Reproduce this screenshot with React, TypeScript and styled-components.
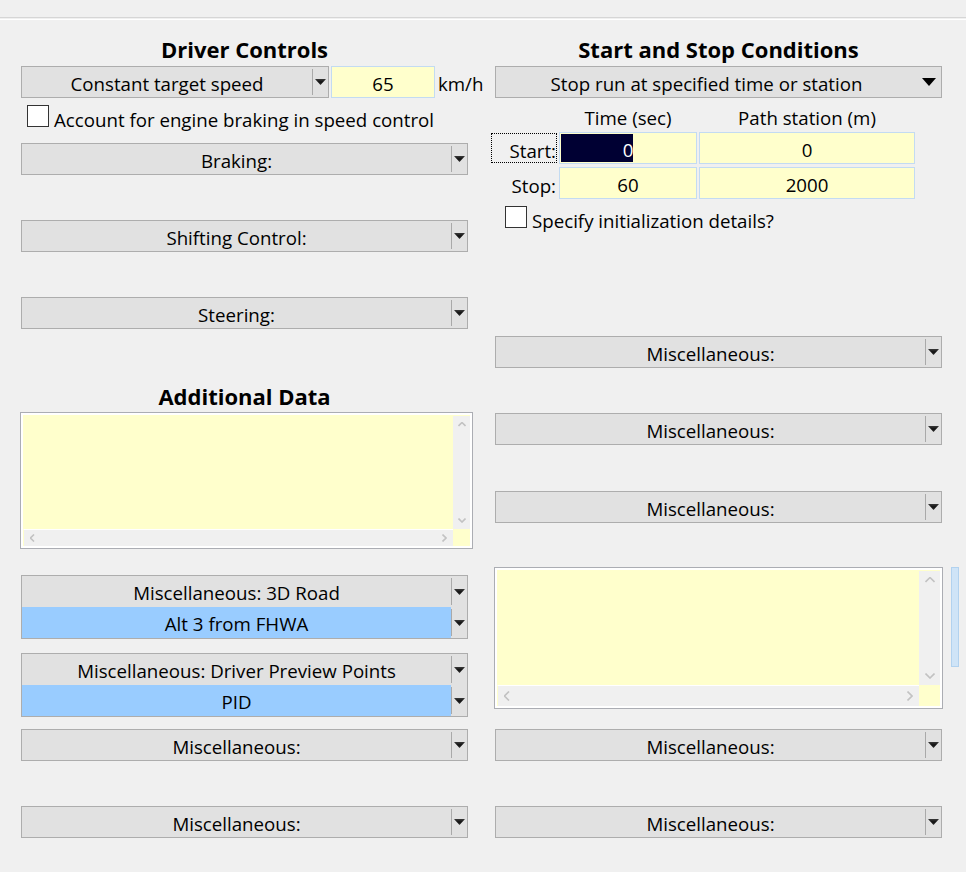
import React from 'react';
import styled, { createGlobalStyle } from 'styled-components';

const GlobalStyle = createGlobalStyle`
  html, body { margin: 0; padding: 0; background: #f0f0f0; }
  body {
    font-family: "Open Sans", "Noto Sans", "Liberation Sans", sans-serif;
    font-size: 18.7px;
    color: #000;
  }
  * { box-sizing: border-box; }
`;

const Window = styled.div`
  width: 966px;
  height: 872px;
  background: #f0f0f0;
  overflow: hidden;
`;

const TopStrip = styled.div`
  height: 18px;
  border-bottom: 1px solid #d6d6d6;
`;

const TopHighlight = styled.div`
  height: 1px;
  margin-top: 1px;
  background: #ffffff;
`;

const Columns = styled.div`
  display: grid;
  grid-template-columns: 447px 447px;
  column-gap: 27px;
  padding-left: 21px;
`;

const Column = styled.div`
  display: flex;
  flex-direction: column;
`;

const Heading = styled.h2<{ $mt: number }>`
  margin: ${(p) => p.$mt}px 0 0;
  height: 26px;
  line-height: 26px;
  font-size: 22px;
  font-weight: 700;
  text-align: center;
  white-space: nowrap;
`;

/* ---------- combo boxes ---------- */

const ComboFrame = styled.div<{ $mt?: number; $w?: number }>`
  margin-top: ${(p) => p.$mt ?? 0}px;
  width: ${(p) => (p.$w ? `${p.$w}px` : '100%')};
  flex-shrink: 0;
  border: 1px solid #adadad;
  background: #e1e1e1;
  display: flex;
  flex-direction: column;
`;

const ComboRow = styled.div<{ $h: number }>`
  height: ${(p) => p.$h}px;
  display: flex;
`;

const ComboText = styled.div<{ $selected?: boolean }>`
  flex: 1;
  display: flex;
  align-items: center;
  justify-content: center;
  padding-top: 2px;
  white-space: nowrap;
  background: ${(p) => (p.$selected ? '#99ccff' : 'transparent')};
`;

const Separator = styled.div`
  width: 1px;
  margin: 2px 0;
  background: #a9a9a9;
`;

const ArrowSlot = styled.div<{ $w: number }>`
  width: ${(p) => p.$w}px;
  display: flex;
  align-items: center;
  justify-content: center;
`;

const SmallArrow = () => (
  <svg width="11" height="6" viewBox="0 0 11 6">
    <defs>
      <linearGradient id="arrowShade" x1="0" y1="0" x2="0" y2="1">
        <stop offset="0" stopColor="#3a3a3a" />
        <stop offset="0.5" stopColor="#111" />
        <stop offset="1" stopColor="#333" />
      </linearGradient>
    </defs>
    <polygon points="0,0 11,0 5.5,6" fill="url(#arrowShade)" />
  </svg>
);

const BigArrow = () => (
  <svg width="14" height="8" viewBox="0 0 14 8">
    <polygon points="0,0 14,0 7,8" fill="#000" />
  </svg>
);

type ComboProps = { label: string; mt?: number; w?: number; plain?: boolean };

const Combo = ({ label, mt, w, plain }: ComboProps) => (
  <ComboFrame $mt={mt} $w={w}>
    <ComboRow $h={30}>
      <ComboText>{label}</ComboText>
      {plain ? (
        <ArrowSlot $w={24}>
          <BigArrow />
        </ArrowSlot>
      ) : (
        <>
          <Separator />
          <ArrowSlot $w={15}>
            <SmallArrow />
          </ArrowSlot>
        </>
      )}
    </ComboRow>
  </ComboFrame>
);

const StackedCombo = ({ label, value, mt }: { label: string; value: string; mt: number }) => (
  <ComboFrame $mt={mt}>
    <ComboRow $h={31}>
      <ComboText>{label}</ComboText>
      <Separator />
      <ArrowSlot $w={15}>
        <SmallArrow />
      </ArrowSlot>
    </ComboRow>
    <ComboRow $h={31}>
      <ComboText $selected>{value}</ComboText>
      <Separator />
      <ArrowSlot $w={15}>
        <SmallArrow />
      </ArrowSlot>
    </ComboRow>
  </ComboFrame>
);

/* ---------- edits ---------- */

const SpeedRow = styled.div<{ $mt: number }>`
  margin-top: ${(p) => p.$mt}px;
  display: flex;
  align-items: center;
  gap: 2px;
`;

const EditBox = styled.div<{ $w?: number }>`
  width: ${(p) => (p.$w ? `${p.$w}px` : 'auto')};
  flex-shrink: 0;
  height: 32px;
  border: 1px solid #c3dbf2;
  background: #ffffcc;
  display: flex;
  align-items: center;
  justify-content: center;
  padding-top: 2px;
  white-space: nowrap;
`;

const Unit = styled.span`
  margin-left: 1px;
  padding-top: 2px;
  white-space: nowrap;
  flex-shrink: 0;
`;

/* ---------- checkbox ---------- */

const CheckRow = styled.label<{ $mt: number; $indent: number }>`
  margin-top: ${(p) => p.$mt}px;
  margin-left: ${(p) => p.$indent}px;
  height: 29px;
  display: flex;
  align-items: flex-start;
  gap: 5px;
  white-space: nowrap;
`;

const CheckBox = styled.span`
  width: 22px;
  height: 22px;
  border: 1px solid #333;
  background: #fff;
  flex-shrink: 0;
`;

const CheckText = styled.span`
  margin-top: 2px;
  line-height: 26px;
`;

/* ---------- start / stop table ---------- */

const CondTable = styled.div<{ $mt: number }>`
  margin-top: ${(p) => p.$mt}px;
  margin-left: -4px;
  display: grid;
  grid-template-columns: 66px 138px 216px;
  grid-template-rows: 23px 32px 32px;
  column-gap: 2px;
  row-gap: 3px;
`;

const ColHead = styled.div`
  line-height: 23px;
  text-align: center;
  white-space: nowrap;
`;

const RowLabel = styled.div<{ $focused?: boolean }>`
  margin: 1px 0;
  border: 1px dotted ${(p) => (p.$focused ? '#000' : 'transparent')};
  display: flex;
  align-items: center;
  justify-content: flex-end;
  padding-top: 4px;
  white-space: nowrap;
`;

const SelectedEdit = styled.div`
  height: 32px;
  border: 1px solid #c3dbf2;
  background: #ffffcc;
  padding: 1px;
  display: flex;
  align-items: stretch;
`;

const SelFill = styled.span`
  flex: 1;
  background: #000033;
`;

const SelText = styled.span`
  background: #000033;
  color: #fff;
  display: flex;
  align-items: center;
  padding-top: 2px;
`;

const SelRest = styled.span`
  flex: 1;
`;

/* ---------- text areas ---------- */

const AreaRow = styled.div<{ $mt: number }>`
  margin-top: ${(p) => p.$mt}px;
  margin-left: -1px;
  display: flex;
  align-items: flex-start;
  gap: 8px;
`;

const TextArea = styled.div<{ $w: number; $h: number; $sb: number }>`
  width: ${(p) => p.$w}px;
  height: ${(p) => p.$h}px;
  flex-shrink: 0;
  border: 1px solid #abadb3;
  padding: 2px;
  background: #fff;
  display: grid;
  grid-template-columns: 1fr ${(p) => p.$sb}px;
  grid-template-rows: 1fr ${(p) => p.$sb}px;
`;

const AreaBody = styled.div`
  background: #ffffcc;
`;

const VScroll = styled.div`
  background: linear-gradient(#ffffcc, #ffffcc) top / 100% 1px no-repeat, #f0f0f0;
  display: flex;
  flex-direction: column;
  align-items: center;
  justify-content: space-between;
  padding: 7px 0 6px;
`;

const HScroll = styled.div`
  background: #f0f0f0;
  border-top: 1px solid #fff;
  border-left: 1px solid #ffffcc;
  display: flex;
  align-items: center;
  justify-content: space-between;
  padding: 0 6px;
`;

const Corner = styled.div`
  background: #ffffcc;
`;

const SideGauge = styled.div`
  width: 8px;
  height: 100px;
  flex-shrink: 0;
  background: #cfe4f7;
  border: 1px solid #b2d2ef;
`;

type Dir = 'up' | 'down' | 'left' | 'right';
const Chevron = ({ dir, size }: { dir: Dir; size: number }) => {
  const s = size;
  const h = Math.round(s / 2);
  const pts: Record<Dir, string> = {
    up: `0.5,${h} ${s / 2},0.5 ${s - 0.5},${h}`,
    down: `0.5,0.5 ${s / 2},${h} ${s - 0.5},0.5`,
    left: `${h},0.5 0.5,${s / 2} ${h},${s - 0.5}`,
    right: `0.5,0.5 ${h},${s / 2} 0.5,${s - 0.5}`,
  };
  const vertical = dir === 'up' || dir === 'down';
  const w = vertical ? s : h + 1;
  const hh = vertical ? h + 1 : s;
  return (
    <svg width={w} height={hh} viewBox={`0 0 ${w} ${hh}`}>
      <polyline points={pts[dir]} fill="none" stroke="#c2c2c2" strokeWidth="1.6" />
    </svg>
  );
};

const ScrollText = ({ w, h, sb, chev }: { w: number; h: number; sb: number; chev: number }) => (
  <TextArea $w={w} $h={h} $sb={sb}>
    <AreaBody />
    <VScroll>
      <Chevron dir="up" size={chev} />
      <Chevron dir="down" size={chev} />
    </VScroll>
    <HScroll>
      <Chevron dir="left" size={chev} />
      <Chevron dir="right" size={chev} />
    </HScroll>
    <Corner />
  </TextArea>
);

export default function App() {
  return (
    <Window>
      <GlobalStyle />
      <TopStrip />
      <TopHighlight />
      <Columns>
        <Column>
          <Heading $mt={16}>Driver Controls</Heading>
          <SpeedRow $mt={4}>
            <Combo label="Constant target speed" w={308} />
            <EditBox $w={104}>65</EditBox>
            <Unit>km/h</Unit>
          </SpeedRow>
          <CheckRow $mt={7} $indent={6}>
            <CheckBox />
            <CheckText>Account for engine braking in speed control</CheckText>
          </CheckRow>
          <Combo label="Braking:" mt={9} />
          <Combo label="Shifting Control:" mt={45} />
          <Combo label="Steering:" mt={45} />
          <Heading $mt={54}>Additional Data</Heading>
          <AreaRow $mt={3}>
            <ScrollText w={453} h={137} sb={17} chev={8} />
          </AreaRow>
          <StackedCombo mt={26} label="Miscellaneous: 3D Road" value="Alt 3 from FHWA" />
          <StackedCombo mt={14} label="Miscellaneous: Driver Preview Points" value="PID" />
          <Combo label="Miscellaneous:" mt={12} />
          <Combo label="Miscellaneous:" mt={45} />
        </Column>

        <Column>
          <Heading $mt={16}>Start and Stop Conditions</Heading>
          <Combo label="Stop run at specified time or station" mt={4} plain />
          <CondTable $mt={8}>
            <span />
            <ColHead>Time (sec)</ColHead>
            <ColHead>Path station (m)</ColHead>
            <RowLabel $focused>Start:</RowLabel>
            <SelectedEdit>
              <SelFill />
              <SelText>0</SelText>
              <SelRest />
            </SelectedEdit>
            <EditBox>0</EditBox>
            <RowLabel>Stop:</RowLabel>
            <EditBox>60</EditBox>
            <EditBox>2000</EditBox>
          </CondTable>
          <CheckRow $mt={7} $indent={10}>
            <CheckBox />
            <CheckText>Specify initialization details?</CheckText>
          </CheckRow>
          <Combo label="Miscellaneous:" mt={101} />
          <Combo label="Miscellaneous:" mt={45} />
          <Combo label="Miscellaneous:" mt={46} />
          <AreaRow $mt={44}>
            <ScrollText w={449} h={142} sb={21} chev={10} />
            <SideGauge />
          </AreaRow>
          <Combo label="Miscellaneous:" mt={20} />
          <Combo label="Miscellaneous:" mt={45} />
        </Column>
      </Columns>
    </Window>
  );
}
